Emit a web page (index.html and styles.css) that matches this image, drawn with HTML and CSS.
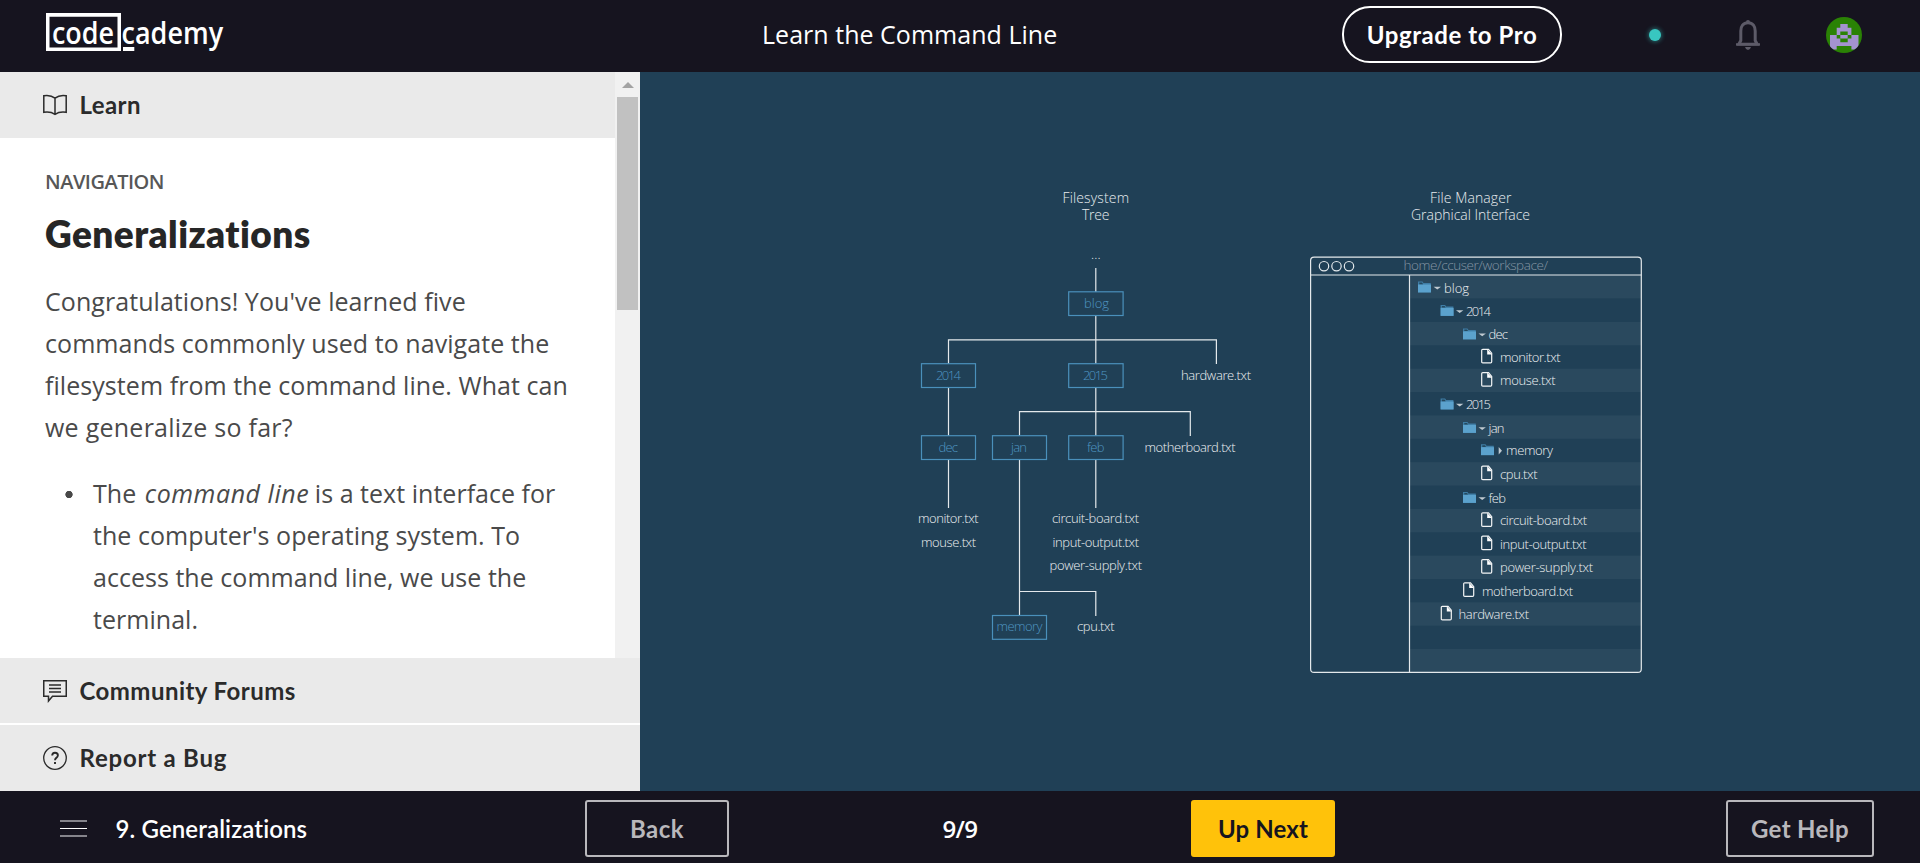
FILE: index.html
```html
<!DOCTYPE html>
<html lang="en">
<head>
<meta charset="utf-8">
<title>Learn the Command Line</title>
<link rel="stylesheet" href="styles.css">
</head>
<body>
<header class="top">
  <svg class="logo" width="190" height="54" viewBox="0 -8 190 54" role="img" aria-label="codecademy">
    <path d="M0 0H75V38H0Z M3.5 3.7V34.5H71.5V3.7Z" fill="#fff" fill-rule="evenodd"/>
    <rect x="77" y="34" width="11.3" height="4" fill="#fff"/>
    <text x="6" y="30.500" textLength="62" lengthAdjust="spacingAndGlyphs">code</text>
    <text x="75.6" y="30.500" textLength="101.500" lengthAdjust="spacingAndGlyphs">cademy</text>
  </svg>
  <div class="course">Learn the Command Line</div>
  <div class="actions">
    <button class="upgrade">Upgrade to Pro</button>
    <span class="status"></span>
    <svg class="bell" width="24" height="30" viewBox="0 0 24 30">
      <path d="M12 2.8C7 2.8 4.8 6.6 4.8 11V20.5L2.8 24.2H21.2L19.2 20.5V11C19.2 6.6 17 2.8 12 2.8Z" fill="none" stroke="#5d5b68" stroke-width="3"/>
      <path d="M0 23.3H24V25.6H0ZM10.2 0.8Q12-.8 13.8 .8V4H10.2ZM9 27H15Q14.2 30 12 30Q9.800 30 9 27Z" fill="#5d5b68"/>
    </svg>
    <svg class="avatar" width="36" height="36" viewBox="0 0 36 36">
      <clipPath id="face"><circle cx="18" cy="18" r="18"/></clipPath>
      <g clip-path="url(#face)">
        <rect width="36" height="36" fill="#2a8205"/>
        <path fill="#a493d0" d="M14.300 7H21.700V10.700H25.400V18H32.500V32.500H25.400V29H10.700V32.500H4V18H10.700V10.700H14.300Z"/>
        <path fill="#2a8205" d="M14.300 14.500H21.700V18H25.400V21.500H21.700V25.200H14.300V21.500H10.700V18H14.300Z"/>
        <rect x="14.300" y="18" width="7.400" height="3.500" fill="#a493d0"/>
      </g>
    </svg>
  </div>
</header>

<main class="main">
  <aside class="side">
    <div class="scroller">
      <div class="content">
        <div class="bar bar-learn">
          <svg class="ico" width="24" height="22" viewBox="0 0 24 22" fill="none" stroke="#2b2b2b" stroke-width="1.500">
            <path d="M.8 1.700Q7.500.5 12 4.200Q16.500.5 23.200 1.700V18.300Q16.500 17.300 12 20.300Q7.500 17.300.8 18.300ZM12 4.200V20.300"/>
          </svg>
          <span class="t-learn">Learn</span>
        </div>
        <article class="lesson">
          <div class="kicker">NAVIGATION</div>
          <h1>Generalizations</h1>
          <p>Congratulations! You've learned five<br>commands commonly used to navigate the<br>filesystem from the command line. What can<br><span class="loose">we generalize so far?</span></p>
          <ul>
            <li>The <em>command line</em> is a text interface for<br>the computer's operating system. To<br>access the command line, we use the<br>terminal.</li>
          </ul>
        </article>
      </div>
      <div class="track">
        <svg class="arrow" width="12" height="6" viewBox="0 0 12 6"><path d="M0 6L6 0L12 6Z" fill="#a3a3a3"/></svg>
        <div class="thumb"></div>
      </div>
    </div>
    <div class="bar bar-forum">
      <svg class="ico" width="24" height="24" viewBox="0 0 24 24" fill="none" stroke="#2b2b2b" stroke-width="1.500">
        <path d="M.75 1.750H23.250V17.250H9.500L5.500 22V17.250H.75ZM6 6H18M6 9.500H18M6 13H18"/>
      </svg>
      <span class="t-forum">Community Forums</span>
    </div>
    <div class="bar bar-bug">
      <svg class="ico" width="24" height="24" viewBox="0 0 24 24" fill="none" stroke="#2b2b2b">
        <circle cx="12" cy="12" r="11.300" stroke-width="1.300"/>
        <path d="M9.200 9.600Q9.200 6.700 12 6.700Q14.900 6.700 14.900 9.300Q14.900 10.800 13.300 11.900Q12 12.800 12 14.300M12 15.900V18" stroke-width="1.900"/>
      </svg>
      <span class="t-bug">Report a Bug</span>
    </div>
  </aside>

  <section class="stage">
    <svg class="figure" width="1280" height="719" viewBox="640 72 1280 719">
      <g class="title">
        <text x="1062.500" y="202.600" textLength="66.500">Filesystem</text>
        <text x="1082" y="220.200" textLength="27.500">Tree</text>
        <text x="1430" y="202.600" textLength="81.500">File Manager</text>
        <text x="1411" y="220.200" textLength="119">Graphical Interface</text>
      </g>
      <path class="wire" d="M1095.800 268V292M1095.800 315.500V364M948.500 364V339.800H1216.400V364M948.500 387.500V436M1095.800 387.500V436M1019.500 436V411.600H1190.300V436M948.500 459.500V508M1095.800 459.500V508M1019.500 459.500V616M1019.500 591.500H1095.800V616"/>
      <g class="node">
        <rect x="1068.700" y="291.800" width="54.400" height="23.700"/>
        <rect x="921.500" y="363.700" width="54" height="23.800"/>
        <rect x="1068.700" y="363.700" width="54.400" height="23.800"/>
        <rect x="921.500" y="435.700" width="54" height="23.800"/>
        <rect x="992.500" y="435.700" width="54" height="23.800"/>
        <rect x="1068.700" y="435.700" width="54.400" height="23.800"/>
        <rect x="992.500" y="615.500" width="54" height="23.800"/>
      </g>
      <g class="label blue">
        <text x="1084" y="308" textLength="25">blog</text>
        <text x="936" y="379.700" textLength="25">2014</text>
        <text x="1083" y="379.700" textLength="25">2015</text>
        <text x="938.500" y="451.500" textLength="19.500">dec</text>
        <text x="1011" y="451.500" textLength="16">jan</text>
        <text x="1087" y="451.500" textLength="17.500">feb</text>
        <text x="996.500" y="631.300" textLength="46">memory</text>
      </g>
      <g class="label">
        <text x="1091" y="258.500" textLength="9.500">...</text>
        <text x="1181" y="379.700" textLength="70">hardware.txt</text>
        <text x="1144.500" y="451.500" textLength="91">motherboard.txt</text>
        <text x="918" y="523.300" textLength="60.500">monitor.txt</text>
        <text x="921" y="546.800" textLength="55">mouse.txt</text>
        <text x="1052" y="523.300" textLength="87">circuit-board.txt</text>
        <text x="1052.500" y="546.800" textLength="86.500">input-output.txt</text>
        <text x="1049.500" y="570.300" textLength="92.500">power-supply.txt</text>
        <text x="1077" y="631.300" textLength="37.500">cpu.txt</text>
      </g>

      <g class="stripe">
        <rect x="1410" y="275" width="231" height="23.400"/>
        <rect x="1410" y="321.900" width="231" height="23.400"/>
        <rect x="1410" y="368.700" width="231" height="23.400"/>
        <rect x="1410" y="415.400" width="231" height="23.400"/>
        <rect x="1410" y="462.100" width="231" height="23.400"/>
        <rect x="1410" y="508.900" width="231" height="23.400"/>
        <rect x="1410" y="555.600" width="231" height="23.400"/>
        <rect x="1410" y="602.300" width="231" height="23.400"/>
        <rect x="1410" y="649" width="231" height="23.400"/>
      </g>
      <g class="frame">
        <rect x="1310.600" y="257.200" width="330.700" height="415.200" rx="3.500"/>
        <path d="M1310.600 275H1641.300M1409.500 275V672.400"/>
        <circle cx="1324" cy="266.200" r="4.700"/><circle cx="1336.500" cy="266.200" r="4.700"/><circle cx="1349" cy="266.200" r="4.700"/>
      </g>
      <text class="path" x="1403.500" y="270.300" textLength="144.500">home/ccuser/workspace/</text>

      <defs>
        <g id="folder"><path d="M0 11.300V.6H4.500L5.500 2H12.800V11.300Z" fill="#3f7da5"/><path d="M0 3.500H13V11.500H0Z" fill="#5ba2cd"/><path d="M1.300 1.600H4L5 3.200H1.300Z" fill="#24495f"/></g>
        <g id="open"><path d="M0 0H7.400L3.700 2.700Z" fill="#c0cad1"/></g>
        <g id="file"><path d="M1.800.7H7.500L10.700 4.500V13Q10.700 14.200 9.600 14.200H1.800Q.7 14.200.7 13V1.800Q.7.700 1.800.7Z" fill="none" stroke="#f3f5f6" stroke-width="1.200"/><path d="M6.200.5L11 5.700H6.200Z" fill="#fff"/></g>
      </defs>
      <use href="#folder" x="1418" y="281"/><use href="#open" x="1433.600" y="286.700"/>
      <use href="#folder" x="1440.600" y="304.400"/><use href="#open" x="1456" y="310.200"/>
      <use href="#folder" x="1463" y="327.900"/><use href="#open" x="1478.500" y="333.600"/>
      <use href="#file" x="1481" y="348.700"/>
      <use href="#file" x="1481" y="372"/>
      <use href="#folder" x="1440.600" y="398"/><use href="#open" x="1456" y="403.700"/>
      <use href="#folder" x="1463" y="421.400"/><use href="#open" x="1478.500" y="427.200"/>
      <use href="#folder" x="1481" y="443.700"/><path d="M1498.700 447V454.500L1502 450.700Z" fill="#c0cad1"/>
      <use href="#file" x="1481" y="465.500"/>
      <use href="#folder" x="1463" y="491.400"/><use href="#open" x="1478.500" y="497.200"/>
      <use href="#file" x="1481" y="512.200"/>
      <use href="#file" x="1481" y="535.500"/>
      <use href="#file" x="1481" y="559"/>
      <use href="#file" x="1463" y="582.200"/>
      <use href="#file" x="1440.600" y="605.700"/>
      <g class="label">
        <text x="1444" y="292.500" textLength="25">blog</text>
        <text x="1466" y="315.700" textLength="25">2014</text>
        <text x="1488.500" y="339.200" textLength="19.500">dec</text>
        <text x="1500" y="362" textLength="60.500">monitor.txt</text>
        <text x="1500" y="385.300" textLength="55.500">mouse.txt</text>
        <text x="1466" y="409.200" textLength="25">2015</text>
        <text x="1488.500" y="432.500" textLength="16">jan</text>
        <text x="1506" y="455.200" textLength="47">memory</text>
        <text x="1500" y="478.700" textLength="37.500">cpu.txt</text>
        <text x="1488.500" y="502.500" textLength="17.500">feb</text>
        <text x="1500" y="525.200" textLength="87">circuit-board.txt</text>
        <text x="1500" y="548.700" textLength="86.500">input-output.txt</text>
        <text x="1500" y="572" textLength="93">power-supply.txt</text>
        <text x="1482" y="595.500" textLength="91">motherboard.txt</text>
        <text x="1458.500" y="618.700" textLength="70.500">hardware.txt</text>
      </g>
    </svg>
  </section>
</main>

<footer class="bottom">
  <div class="where">
    <svg class="menu" width="27" height="18" viewBox="0 0 27 18"><path d="M0 1H27M0 16H27" stroke="#85848b" stroke-width="2"/><path d="M0 8.500H27" stroke="#fff"/></svg>
    <span>9. Generalizations</span>
  </div>
  <div class="pager">
    <button class="btn back">Back</button>
    <span class="count">9/9</span>
    <button class="btn next">Up Next</button>
  </div>
  <button class="btn help">Get Help</button>
</footer>
</body>
</html>
```
FILE: styles.css
```css
* { box-sizing: border-box; }

body {
  margin: 0;
  height: 863px;
  display: flex;
  flex-direction: column;
  overflow: hidden;
  background: #16141f;
  font-family: "Open Sans", sans-serif;
  white-space: nowrap;
}

button {
  margin: 0;
  padding: 0;
  background: none;
  font: 700 24px/30px Lato, sans-serif;
}

/* header */
.top {
  flex: none;
  height: 72px;
  padding: 0 58px 3px 46px;
  display: grid;
  grid-template-columns: 716px 1fr auto;
  align-items: center;
  color: #fff;
}
.logo { display: block; margin-top: -5px; overflow: visible; }
.logo text { font: 600 30px "Open Sans", sans-serif; fill: #fff; }
.course { font-size: 25px; line-height: 32px; padding-bottom: 1px; letter-spacing: .03px; }
.actions { display: flex; align-items: center; }
.upgrade {
  width: 220px;
  height: 57px;
  border: 2px solid #fff;
  border-radius: 28px;
  color: #fff;
  letter-spacing: .58px;
}
.status {
  width: 12px;
  height: 12px;
  margin: 0 75px 0 87px;
  border-radius: 50%;
  background: #38c6c0;
  box-shadow: 0 0 4px 1px rgba(56, 198, 192, .45);
}
.bell { margin-right: 66px; }

/* left column */
.main { flex: none; height: 719px; display: flex; }
.side { width: 640px; background: #fff; display: flex; flex-direction: column; }
.scroller { flex: none; height: 586px; display: flex; overflow: hidden; }
.content { width: 615px; }
.bar {
  display: flex;
  align-items: center;
  padding: 0 0 0 43px;
  background: #eaeaea;
  color: #2b2b2b;
  font: 700 24px/30px Lato, sans-serif;
}
.ico { margin-right: 12.500px; }
.bar-learn { height: 66px; }
.bar-forum { height: 65px; margin-bottom: 2px; }
.bar-bug { height: 66px; }
.t-learn { letter-spacing: .4px; }
.t-forum { letter-spacing: .45px; }
.t-bug { letter-spacing: .78px; }

.lesson { padding: 33px 0 0 45px; color: #4a4a4a; }
.kicker { font-size: 20px; line-height: 24px; font-weight: 600; letter-spacing: -.5px; margin-top: -1px; color: #575757; }
h1 {
  margin: 18px 0 24px;
  font: 800 37px/44px Lato, sans-serif;
  letter-spacing: .42px;
  color: #262626;
}
p, ul { margin: 0; font-size: 25px; line-height: 42px; letter-spacing: .06px; }
em { margin: 0 -1px 0 2px; letter-spacing: .55px; }
.loose { letter-spacing: .25px; }
ul { margin-top: 24px; padding: 0; list-style: none; letter-spacing: .03px; }
li { padding-left: 48px; display: block; background: radial-gradient(circle at 24px 22.500px, #484848 3.300px, transparent 4px); }

.track { width: 25px; background: #f1f1f1; display: flex; flex-direction: column; align-items: center; }
.arrow { margin: 10px 0 9px; }
.thumb { width: 21px; height: 213px; background: #c1c1c1; }

/* diagram */
.stage { flex: 1; background: #204056; }
.figure { display: block; }
.figure text { font-family: "Open Sans", sans-serif; font-weight: 350; }
.title text { font-size: 14px; fill: #e9edef; }
.label text { font-size: 13px; fill: #eef1f3; }
.label.blue text { fill: #4f96c2; }
.figure .path { font-size: 13.500px; fill: #8495a3; }
.wire { fill: none; stroke: #e4e9ec; stroke-width: 1.200; }
.node rect { fill: none; stroke: #4a90bb; stroke-width: 1.200; }
.stripe rect { fill: #2a495e; }
.frame * { fill: none; stroke: #e4e9ec; stroke-width: 1.200; }

/* footer */
.bottom {
  flex: none;
  height: 72px;
  padding: 9px 46px 0 60px;
  display: flex;
  align-items: flex-start;
  color: #fff;
}
.where {
  width: 525px;
  height: 57px;
  display: flex;
  align-items: center;
  gap: 28.500px;
  font: 600 24px/30px Lato, sans-serif;
  letter-spacing: .12px;
}
.pager { width: 750px; display: flex; align-items: flex-start; justify-content: space-between; }
.btn { height: 57px; border: 2px solid #b9b8bc; border-radius: 3px; color: #b9b8bc; }
.back { width: 144px; letter-spacing: .44px; }
.count { font-size: 24px; line-height: 57px; font-weight: 600; letter-spacing: -.6px; }
.next { width: 144px; border-color: #ffc20a; background: #ffc20a; color: #16141f; letter-spacing: .15px; }
.help { width: 148px; margin-left: auto; letter-spacing: .35px; }
```
